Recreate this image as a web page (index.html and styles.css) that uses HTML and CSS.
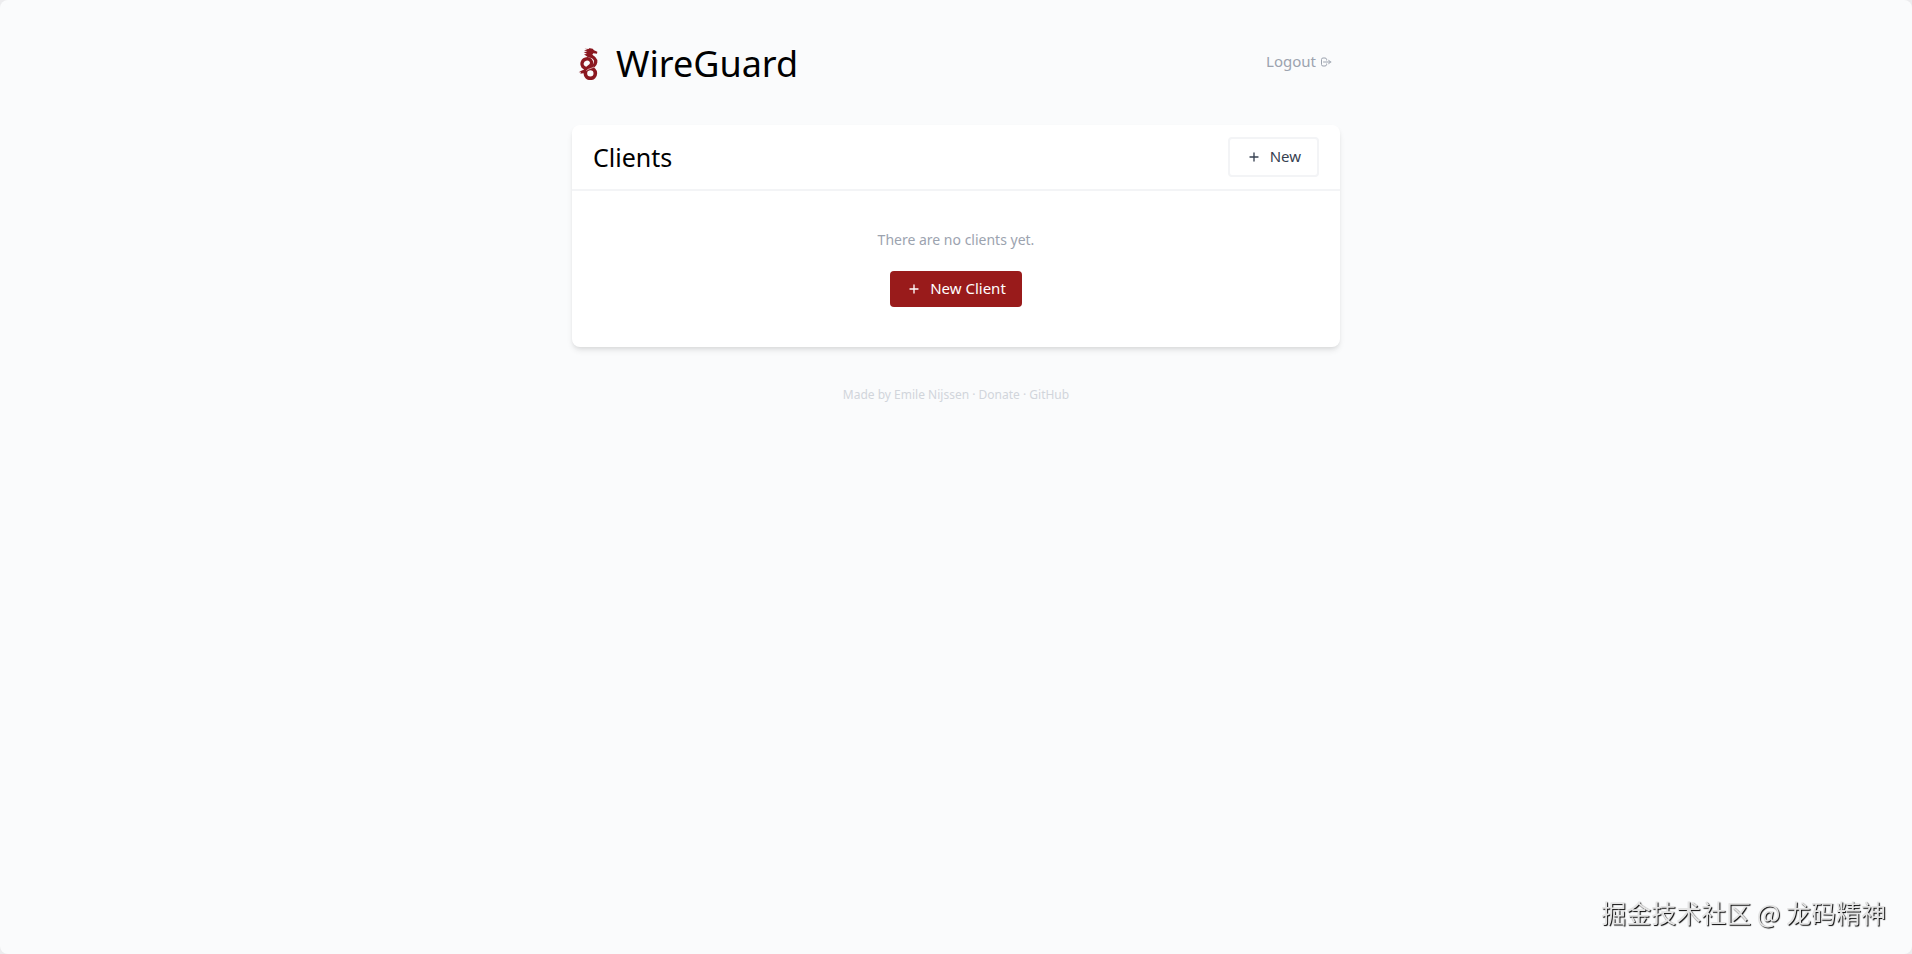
FILE: index.html
```html
<!DOCTYPE html>
<html lang="en">
<head>
<meta charset="utf-8">
<title>WireGuard</title>
<meta name="viewport" content="width=device-width, initial-scale=1">
<link rel="stylesheet" href="styles.css">
</head>
<body>
<div class="container">
  <header class="top">
    <h1 class="brand">
      <svg class="logo" viewBox="0 0 96 96" fill="none" stroke="#8b1820" aria-hidden="true">
        <circle cx="55" cy="76" r="15" stroke-width="11"/>
        <path d="M46 62C33 61 29 52 30 46C32 33 48 28 56 37C62 44 58 51 52 55C46 59 40 63 38 70" stroke-width="10"/>
        <path d="M46 21C58 24 73 31 71 43C70 54 58 59 46 64" stroke-width="10"/>
        <path d="M66 57C58 62 48 62 43 68" stroke="#f3dfe1" stroke-width="2"/>
        <path d="M40 65L31 67L20 73L27 73L25 77L38 75Z" fill="#8b1820" stroke="none"/>
        <path d="M38 2L52 3L50 0L62 2L66 7L76 11L75 17L64 16L61 20L68 27L60 30L44 25L36 19L45 18L35 12L46 11L36 7L47 6Z" fill="#8b1820" stroke="none"/>
      </svg>
      <span>WireGuard</span>
    </h1>
    <button class="logout" type="button">Logout
      <svg class="logout-icon" viewBox="0 0 24 24" fill="none" stroke="currentColor" stroke-width="2" stroke-linecap="round" stroke-linejoin="round" aria-hidden="true"><path d="M17 16l4-4m0 0l-4-4m4 4H7m6 4v1a3 3 0 01-3 3H6a3 3 0 01-3-3V7a3 3 0 013-3h4a3 3 0 013 3v1"/></svg>
    </button>
  </header>
  <main class="card">
    <div class="card-head">
      <h2 class="card-title">Clients</h2>
      <button class="btn btn-outline" type="button">
        <svg class="plus" viewBox="0 0 24 24" fill="none" stroke="currentColor" stroke-width="2" stroke-linecap="round" aria-hidden="true"><path d="M12 6v12m6-6H6"/></svg>
        <span>New</span>
      </button>
    </div>
    <div class="empty">
      <p class="empty-text">There are no clients yet.</p>
      <button class="btn btn-primary" type="button">
        <svg class="plus" viewBox="0 0 24 24" fill="none" stroke="currentColor" stroke-width="2" stroke-linecap="round" aria-hidden="true"><path d="M12 6v12m6-6H6"/></svg>
        <span>New Client</span>
      </button>
    </div>
  </main>
  <footer class="footer">Made by <a href="#author">Emile Nijssen</a> · <a href="#donate">Donate</a> · <a href="#github">GitHub</a></footer>
</div>
<div class="watermark">掘金技术社区 @ 龙码精神</div>
</body>
</html>
```
FILE: styles.css
```css
* { box-sizing: border-box; }
html { background: #ececee; }
body {
  margin: 0;
  min-height: 100vh;
  background: #fafbfc;
  border-radius: 8px;
  color: #000;
  font: 15px/24px "Noto Sans", "Open Sans", sans-serif;
}
h1, h2, p { margin: 0; font-weight: 400; }
button { font: inherit; cursor: pointer; }
.container { max-width: 768px; margin: 0 auto; padding-top: 40px; }
.top { display: flex; justify-content: space-between; align-items: flex-start; }
.brand { display: flex; align-items: center; gap: 12px; font-size: 36px; line-height: 48px; }
.logo { width: 32px; height: 32px; }
.logout { display: flex; align-items: center; gap: 4px; margin: 9px 8px 0 0; padding: 0; border: 0; background: none; color: #9ca3af; }
.logout-icon { width: 12px; height: 12px; margin-top: 2px; }
.card {
  margin-top: 37px;
  background: #fff;
  border-radius: 8px;
  box-shadow: 0 4px 6px -1px rgba(0, 0, 0, .1), 0 2px 4px -1px rgba(0, 0, 0, .06);
}
.card-head { display: flex; align-items: center; justify-content: space-between; padding: 12px 21px; border-bottom: 2px solid #f3f4f6; }
.card-title { font-size: 25px; line-height: 32px; }
.btn { display: inline-flex; align-items: center; padding: 5px 16px 7px; border: 0; border-radius: 4px; }
.btn-outline { border: 2px solid #f3f4f6; background: #fff; color: #374151; }
.btn-primary { background: #991b1b; color: #fff; }
.plus { width: 16px; height: 16px; margin: 2px 8px 0 0; }
.empty { padding: 37px 20px 40px; text-align: center; color: #9ca3af; }
.empty-text { margin-bottom: 19px; font-size: 14px; }
.footer { margin-top: 36px; text-align: center; font-size: 12px; line-height: 24px; color: #d1d5db; }
.footer a { color: inherit; text-decoration: none; }
.watermark {
  position: fixed;
  right: 26px;
  bottom: 22px;
  color: #e4e4e4;
  font: 25px/40px "Noto Sans CJK SC", sans-serif;
  text-shadow: 1px 1px 1px #000;
}
```
